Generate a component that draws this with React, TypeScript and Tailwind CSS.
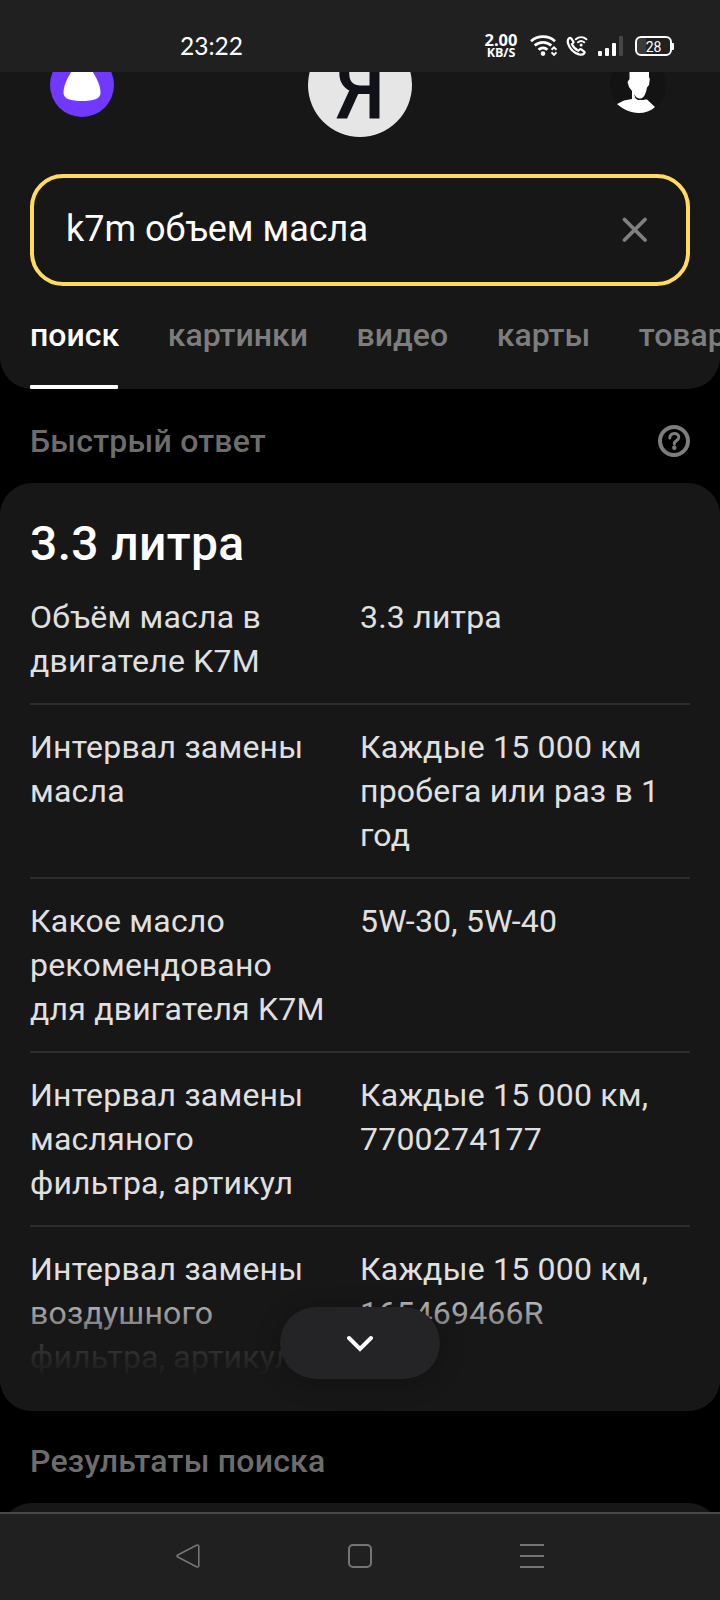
import type { ReactNode } from 'react';

type Fact = {
  question: string;
  answer: string;
};

const TABS = ['поиск', 'картинки', 'видео', 'карты', 'товары'];

const FACTS: Fact[] = [
  { question: 'Объём масла в двигателе K7M', answer: '3.3 литра' },
  { question: 'Интервал замены масла', answer: 'Каждые 15 000 км пробега или раз в 1 год' },
  { question: 'Какое масло рекомендовано для двигателя K7M', answer: '5W-30, 5W-40' },
  { question: 'Интервал замены масляного фильтра, артикул', answer: 'Каждые 15 000 км, 7700274177' },
  { question: 'Интервал замены воздушного фильтра, артикул', answer: 'Каждые 15 000 км, 165469466R' },
];

function WifiIcon() {
  return (
    <svg width="28" height="22" viewBox="0 0 28 22" fill="none" stroke="#fff" strokeWidth="2.8">
      <path d="M1 6.2C7.6 .2 18.4 .2 25 6.2" />
      <path d="M4.7 10.6C9.4 6.2 16.6 6.2 21.3 10.6" />
      <path d="M8.6 14.8C11.2 12.3 14.8 12.3 17.4 14.8" />
      <circle cx="13" cy="18.6" r="2.3" fill="#fff" stroke="none" />
      <path d="M21.5 14.8L24 12.4L26.5 14.8M21.5 17.4L24 19.8L26.5 17.4" strokeWidth="2" />
    </svg>
  );
}

function WifiCallIcon() {
  return (
    <svg width="22" height="22" viewBox="0 0 22 22" fill="none" stroke="#fff" strokeLinecap="round">
      <path
        d="M3.2 3.2C1.6 4.6 1.4 6.4 2.1 8.6C3.7 13.4 8.2 17.9 13 19.4C15.2 20 17 19.8 18.3 18.2C18.8 17.5 18.7 17 18.1 16.5L15.3 14.4C14.7 14 14.2 14 13.7 14.5L12.4 15.7C9.6 14.4 7.3 12 6 9.2L7.2 7.9C7.6 7.4 7.6 6.9 7.2 6.3L5.2 3.5C4.6 2.8 3.9 2.7 3.2 3.2Z"
        strokeWidth="2.2"
      />
      <path d="M9.8 4.3C12.9 1.6 17.3 1.6 20.4 4.3" strokeWidth="2" />
      <path d="M12 7.3C13.9 5.7 16.3 5.7 18.2 7.3" strokeWidth="2" />
      <circle cx="15.1" cy="10" r="1.5" fill="#fff" stroke="none" />
    </svg>
  );
}

function StatusBar() {
  return (
    <div className="flex h-[72px] shrink-0 items-start bg-[#202020] pl-[180px] text-white">
      <span className="mt-[31px] w-[304px] font-[Lato] text-[24.5px] leading-[30px]">23:22</span>
      <div className="mt-[33px] flex w-[34px] flex-col items-center font-['Open_Sans'] font-bold">
        <span className="text-[16.5px] leading-[14px]">2.00</span>
        <span className="text-[12.5px] leading-[12px]">KB/S</span>
      </div>
      <div className="mt-[35px] ml-[12px]">
        <WifiIcon />
      </div>
      <div className="mt-[35px] ml-[8px]">
        <WifiCallIcon />
      </div>
      <div className="mt-[36px] ml-[10px] flex h-5 items-end gap-[3px]">
        <i className="h-[5px] w-1 rounded-[1px] bg-white" />
        <i className="h-2 w-1 rounded-[1px] bg-white" />
        <i className="h-[13px] w-1 rounded-[1px] bg-white" />
        <i className="h-5 w-1 rounded-[1px] bg-[#464646]" />
      </div>
      <div className="mt-[36px] ml-[12px] flex items-center">
        <div className="flex h-5 w-[37px] items-center justify-center rounded-[6px] border-2 border-white bg-linear-to-r from-[#3a3a3a] from-28% to-transparent to-28% pt-px font-[Roboto] text-[14px] leading-none">
          28
        </div>
        <i className="h-[7px] w-[2px] rounded-r-[1px] bg-white" />
      </div>
    </div>
  );
}

function HeaderIcons() {
  return (
    <div className="-mt-[39px] flex h-[104px] items-center justify-between pr-[54px] pl-[50px]">
      <svg width="64" height="64" viewBox="0 0 64 64">
        <circle cx="32" cy="32" r="32" fill="#7139ff" />
        <path
          d="M32 10C38 10 42.5 18 46.5 25.5C49.5 31.5 50.5 36 50.5 40C50.5 46 43 48 32 48S13.5 46 13.5 40C13.5 36 14.5 31.5 17.5 25.5C21.5 18 26 10 32 10Z"
          fill="#fff"
        />
      </svg>
      <svg width="104" height="104" viewBox="0 0 104 104" className="-ml-[4px]">
        <circle cx="52" cy="52" r="52" fill="#e6e6e6" />
        <text
          x="0"
          y="0"
          transform="translate(27.5 84.5) scale(.9 1)"
          className="font-[Roboto] text-[90px] font-medium"
          fill="#101217"
        >
          Я
        </text>
      </svg>
      <svg width="56" height="56" viewBox="0 0 56 56">
        <circle cx="28" cy="28" r="28" fill="#131313" />
        <path
          d="M19.5 8H39V20L39.8 22L39 28L37 30.5C36 36 34 41 31 41.5L34 42.5H37L45 50C40.5 54 35 56 28.5 56C20.5 55.5 13.5 52.5 7 47L14 43.5L22 42V34L19 30L17.5 25L19.5 22Z"
          fill="#fff"
        />
        <path d="M24 37L26.5 40.5L29 41.5H33L35 43H28L25.5 41.5Z" fill="#131313" />
      </svg>
    </div>
  );
}

function SearchBox() {
  return (
    <div className="mx-[30px] mt-[37px] flex h-[112px] items-center justify-between rounded-[33px] border-4 border-[#ffdc60] pr-[38px] pl-8">
      <span className="-mt-[2px] text-[36px] leading-[44px] text-white">k7m объем масла</span>
      <svg width="26" height="26" viewBox="0 0 26 26" stroke="#808080" strokeWidth="3.8" strokeLinecap="round">
        <path d="M2.5 2.5L23 23M23 2.5L2.5 23" />
      </svg>
    </div>
  );
}

function Tabs() {
  return (
    <div className="flex h-[103px] gap-[48.6px] pl-[30px] text-[32px] leading-[44px] font-medium">
      {TABS.map((tab, index) => (
        <div
          key={tab}
          className={
            index === 0
              ? 'flex flex-col justify-between pt-[27px] text-white'
              : 'flex flex-col justify-between pt-[27px] text-[#7d7d7d]'
          }
        >
          {tab}
          {index === 0 && <div className="h-1 w-[88px] rounded-[1px] bg-white" />}
        </div>
      ))}
    </div>
  );
}

function SectionLabel({ children }: { children: ReactNode }) {
  return <h2 className="text-[32px] leading-[44px] font-medium tracking-[0.22px] text-[#6d6d6d]">{children}</h2>;
}

function HelpIcon() {
  return (
    <svg width="32" height="32" viewBox="0 0 32 32" fill="none" stroke="#7d7d7d">
      <circle cx="16" cy="16" r="14" strokeWidth="4" />
      <path d="M11.8 13C12 7 20.8 7.2 20.8 12.2C20.8 15.5 16.3 15.6 16.3 19" strokeWidth="3" strokeLinecap="round" />
      <circle cx="16.3" cy="22.8" r="2.2" fill="#7d7d7d" stroke="none" />
    </svg>
  );
}

function QuickAnswer() {
  return (
    <section className="relative h-[928px] shrink-0 overflow-hidden rounded-[32px] bg-[#171717] px-[30px] pt-[33px]">
      <h1 className="text-[48px] leading-[56px] font-medium tracking-[0.35px] text-white">3.3 литра</h1>
      <div className="mt-[3px] divide-y-2 divide-[#2d2d2d] tracking-[0.21px] text-[#e0e0e0]">
        {FACTS.map((fact) => (
          <div key={fact.question} className="grid grid-cols-2 py-5 text-[32px] leading-[44px]">
            <div className="pr-8">{fact.question}</div>
            <div>{fact.answer}</div>
          </div>
        ))}
      </div>

      {/* Fade over the collapsed part */}
      <div className="absolute inset-x-0 bottom-0 h-[128px] bg-[linear-gradient(to_bottom,#17171700_0px,#17171770_40px,#171717d8_62px,#171717f0_82px,#171717_98px)]" />
      <button className="absolute bottom-8 left-1/2 flex h-[72px] w-40 -translate-x-1/2 items-center justify-center rounded-[36px] bg-[#242426] shadow-[0_4px_24px_rgba(0,0,0,0.25)]">
        <svg width="28" height="18" viewBox="0 0 28 18" fill="none" stroke="#fff" strokeWidth="4" strokeLinecap="round">
          <path d="M3 4L14 15L25 4" />
        </svg>
      </button>
    </section>
  );
}

function NavBar() {
  return (
    <nav className="flex h-[88px] shrink-0 items-center justify-between border-t-2 border-[#484848] bg-[#202020] px-[176px] pb-[2px]">
      <svg width="24" height="24" viewBox="0 0 24 24" fill="none" stroke="#757575" strokeWidth="1.6" strokeLinejoin="round">
        <path d="M1.8 11L20.5 1.3C21.9 .7 22.8 1.2 22.8 2.4V21.6C22.8 22.8 21.9 23.3 20.5 22.7L1.8 13C.7 12.4 .7 11.6 1.8 11Z" />
      </svg>
      <div className="h-6 w-6 rounded-[5px] border-2 border-[#757575]" />
      <div className="flex h-6 w-6 flex-col justify-between">
        <i className="h-[2px] bg-[#757575]" />
        <i className="h-[2px] bg-[#757575]" />
        <i className="h-[2px] bg-[#757575]" />
      </div>
    </nav>
  );
}

export default function App() {
  return (
    <div className="flex h-[1600px] w-[720px] flex-col overflow-hidden bg-black font-[Roboto,sans-serif]">
      <StatusBar />
      <header className="h-[317px] shrink-0 overflow-hidden rounded-b-[32px] bg-[#171717]">
        <HeaderIcons />
        <SearchBox />
        <Tabs />
      </header>
      <div className="flex h-[94px] shrink-0 items-start justify-between px-[30px] pt-[30px]">
        <SectionLabel>Быстрый ответ</SectionLabel>
        <div className="pt-[6px]">
          <HelpIcon />
        </div>
      </div>
      <QuickAnswer />
      <div className="h-[92px] shrink-0 px-[30px] pt-7">
        <SectionLabel>Результаты поиска</SectionLabel>
      </div>
      <div className="min-h-0 flex-1 overflow-hidden">
        <div className="h-20 rounded-t-[32px] bg-[#171717]" />
      </div>
      <NavBar />
    </div>
  );
}
